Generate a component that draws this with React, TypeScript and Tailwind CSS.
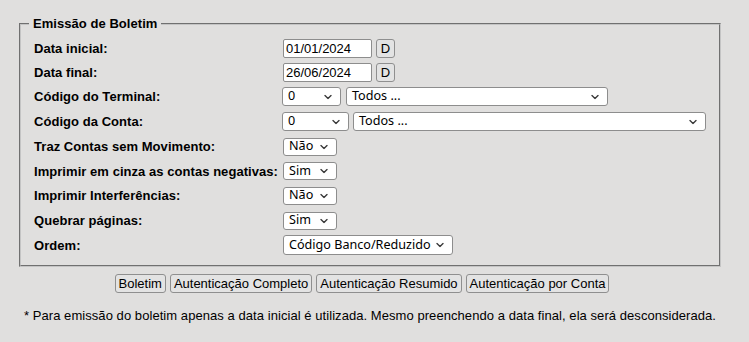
import React from "react";

const arial = "font-['Liberation_Sans',Arial,sans-serif]";
const uiFont = "font-['Noto_Sans',sans-serif]";

function Chevron() {
  return (
    <svg width="8" height="5" viewBox="0 0 8 5" className="absolute right-[8px] top-1/2 -translate-y-1/2 pointer-events-none">
      <path d="M1 1 L4 4 L7 1" fill="none" stroke="#3b3b3b" strokeWidth="1.4" strokeLinecap="round" strokeLinejoin="round" />
    </svg>
  );
}

function FakeSelect({ value, width, height = "h-[19px]" }: { value: string; width: string; height?: string }) {
  return (
    <div className={`relative ${width} ${height} shrink-0 bg-white border border-[#8d8d8d] rounded-[3px] flex items-center pl-[5px] ${uiFont} text-[12.6px] text-black leading-none`}>
      <span>{value}</span>
      <Chevron />
    </div>
  );
}

function DateField({ value }: { value: string }) {
  return (
    <div className="flex items-center gap-[4px]">
      <div className={`w-[89px] h-[19px] bg-white border border-[#8d8d8d] rounded-[2px] flex items-center pl-[2px] ${arial} text-[13px] text-black leading-none`}>
        {value}
      </div>
      <button className={`w-[19px] h-[19px] bg-[#e3e3e3] border border-[#8f8f8f] rounded-[3px] ${arial} text-[13px] text-black leading-none flex items-center justify-center`}>
        D
      </button>
    </div>
  );
}

const rows: { label: string; h: string; control: React.ReactNode }[] = [
  { label: "Data inicial:", h: "h-[24px]", control: <DateField value="01/01/2024" /> },
  { label: "Data final:", h: "h-[24px]", control: <DateField value="26/06/2024" /> },
  {
    label: "Código do Terminal:",
    h: "h-[25px]",
    control: (
      <div className="flex items-center gap-[5px] -ml-px">
        <FakeSelect value="0" width="w-[59px]" />
        <FakeSelect value="Todos ..." width="w-[262px]" />
      </div>
    ),
  },
  {
    label: "Código da Conta:",
    h: "h-[25px]",
    control: (
      <div className="flex items-center gap-[4px] -ml-px">
        <FakeSelect value="0" width="w-[67px]" />
        <FakeSelect value="Todos ..." width="w-[353px]" />
      </div>
    ),
  },
  { label: "Traz Contas sem Movimento:", h: "h-[25px]", control: <FakeSelect value="Não" width="w-[54px]" height="h-[18px]" /> },
  { label: "Imprimir em cinza as contas negativas:", h: "h-[24px]", control: <FakeSelect value="Sim" width="w-[54px]" height="h-[18px]" /> },
  { label: "Imprimir Interferências:", h: "h-[25px]", control: <FakeSelect value="Não" width="w-[54px]" height="h-[18px]" /> },
  { label: "Quebrar páginas:", h: "h-[25px]", control: <FakeSelect value="Sim" width="w-[54px]" height="h-[18px]" /> },
  { label: "Ordem:", h: "h-[24px]", control: <FakeSelect value="Código Banco/Reduzido" width="w-[170px]" height="h-[20px]" /> },
];

const actions = ["Boletim", "Autenticação Completo", "Autenticação Resumido", "Autenticação por Conta"];

export default function App() {
  return (
    <div className={`w-[749px] h-[342px] bg-[#e0dfde] text-black ${arial} overflow-hidden`}>
      <div className="ml-[19px] w-[702px] pt-[16px]">
        <fieldset className="border-2 [border-style:groove] border-[#c4c4c4] px-2 pt-[5px] pb-[8px]">
          <legend className="px-[4px] text-[13px] font-bold leading-[15px] tracking-[0.05px]">Emissão de Boletim</legend>
          <div className="flex flex-col">
            {rows.map((r) => (
              <div key={r.label} className={`flex items-center ${r.h}`}>
                <div className="w-[254px] pl-[5px] text-[13px] font-bold leading-[15px] tracking-[0.05px] whitespace-nowrap">{r.label}</div>
                {r.control}
              </div>
            ))}
          </div>
        </fieldset>

        <div className="flex justify-center gap-[4px] mt-[7px] pr-[16px]">
          {actions.map((a) => (
            <button
              key={a}
              className="h-[19px] px-[3px] bg-[#e3e3e3] border border-[#8f8f8f] rounded-[3px] text-[13px] leading-none text-black"
            >
              {a}
            </button>
          ))}
        </div>

        <p className="mt-[15px] text-center text-[13px] leading-[15px] tracking-[0.06px] whitespace-nowrap">
          * Para emissão do boletim apenas a data inicial é utilizada. Mesmo preenchendo a data final, ela será desconsiderada.
        </p>
      </div>
    </div>
  );
}
